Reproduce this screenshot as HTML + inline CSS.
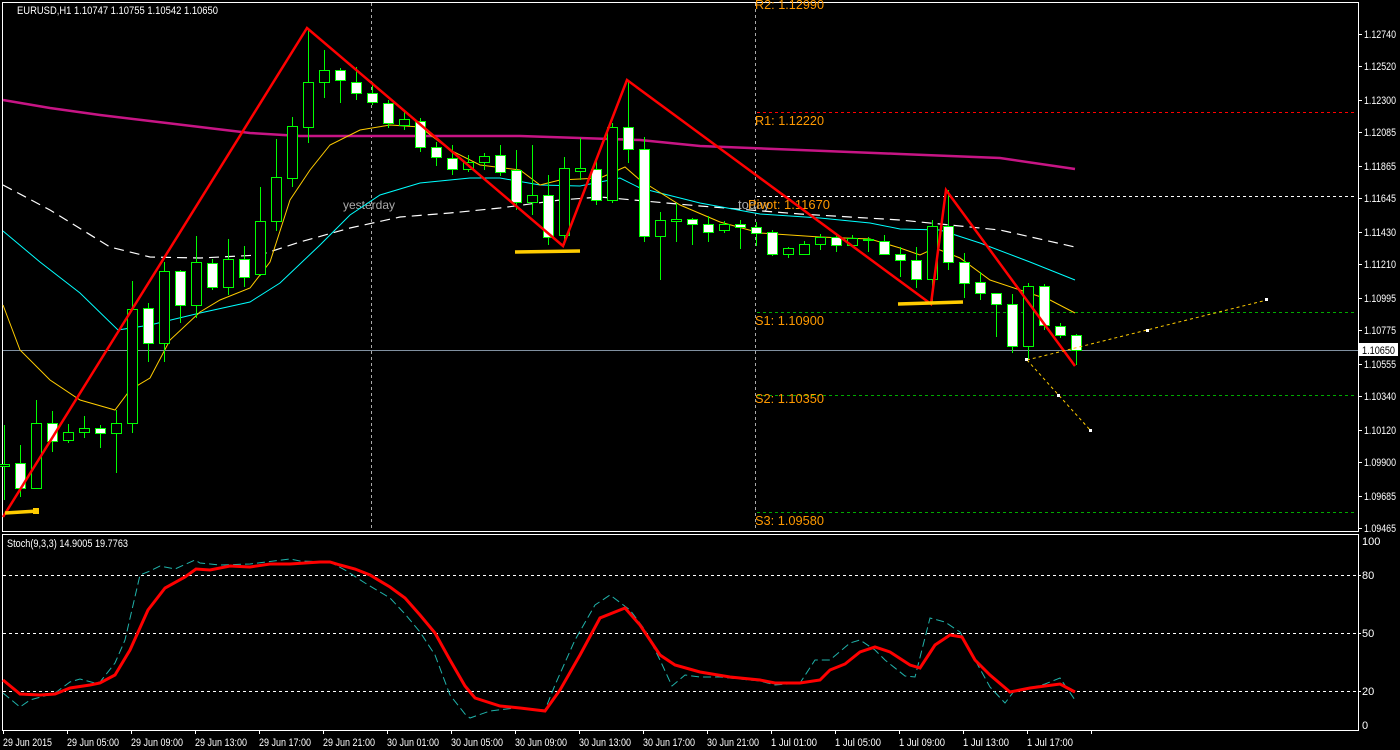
<!DOCTYPE html>
<html><head><meta charset="utf-8">
<style>
html,body{margin:0;padding:0;background:#000;width:1400px;height:750px;overflow:hidden}
svg{display:block}
text{font-family:"Liberation Sans",sans-serif}
</style></head><body>
<svg id="s" width="1400" height="750" viewBox="0 0 1400 750" xmlns="http://www.w3.org/2000/svg">
<rect width="1400" height="750" fill="#000"/>
<rect x="2.5" y="2.5" width="1356" height="529" fill="none" stroke="#fff" stroke-width="1"/>
<rect x="2.5" y="534.5" width="1356" height="196" fill="none" stroke="#fff" stroke-width="1"/>
<line x1="371.5" y1="3" x2="371.5" y2="531" stroke="#aaa" stroke-dasharray="3,3"/>
<line x1="755.5" y1="3" x2="755.5" y2="531" stroke="#aaa" stroke-dasharray="3,3"/>
<line x1="757" y1="112.5" x2="1357" y2="112.5" stroke="#f00" stroke-dasharray="3,3"/>
<line x1="757" y1="196.5" x2="1357" y2="196.5" stroke="#fff" stroke-dasharray="3,3"/>
<line x1="757" y1="312.5" x2="1357" y2="312.5" stroke="#0a0" stroke-dasharray="3,3"/>
<line x1="757" y1="395.5" x2="1357" y2="395.5" stroke="#0a0" stroke-dasharray="3,3"/>
<line x1="757" y1="512.5" x2="1357" y2="512.5" stroke="#0a0" stroke-dasharray="3,3"/>
<line x1="3" y1="350.5" x2="1358" y2="350.5" stroke="#8090a0"/>
<g font-size="13" fill="#f90">
<text x="755" y="9" textLength="69" lengthAdjust="spacingAndGlyphs">R2: 1.12990</text>
<text x="755" y="125" textLength="69" lengthAdjust="spacingAndGlyphs">R1: 1.12220</text>
<text x="755" y="325" textLength="69" lengthAdjust="spacingAndGlyphs">S1: 1.10900</text>
<text x="755" y="403" textLength="69" lengthAdjust="spacingAndGlyphs">S2: 1.10350</text>
<text x="755" y="525" textLength="69" lengthAdjust="spacingAndGlyphs">S3: 1.09580</text>
</g>
<text x="343" y="209" font-size="12" fill="#aaa">yesterday</text>
<text x="738" y="209" font-size="13" fill="#aaa">today</text>
<text x="748" y="209" font-size="13" fill="#f90" textLength="82" lengthAdjust="spacingAndGlyphs">Pivot: 1.11670</text>
<g fill="none">
<polyline stroke="#c71585" stroke-width="2.5" points="3,100 50,108 100,115 150,121 200,127 250,133 300,136 400,136 520,136 640,140 700,146 800,150 900,154 1000,158 1075,169"/>
<polyline stroke="#fff" stroke-width="1.2" stroke-dasharray="10,6" points="3,185 50,210 110,247 150,257 200,258 260,255 300,242 350,228 400,217 450,213 500,208 560,200 600,197 700,206 800,214 900,220 1000,230 1075,247"/>
<polyline stroke="#0ff" stroke-width="1" points="3,231 40,262 80,293 118,330 150,325 200,313 250,302 280,283 320,245 350,215 380,195 420,183 470,178 500,178 540,185 580,186 620,178 640,188 700,203 760,214 820,218 870,223 900,229 940,230 980,243 1030,262 1075,280"/>
<polyline stroke="#fc0" stroke-width="1" points="3,305 20,350 50,380 80,400 115,410 130,390 150,378 170,340 200,312 220,300 250,288 270,262 290,200 310,170 330,145 360,130 390,125 420,127 450,150 480,165 520,170 540,185 560,180 600,178 625,167 640,180 680,205 720,222 760,233 820,237 870,239 900,248 920,255 935,248 960,258 990,280 1020,290 1050,300 1075,313"/>
</g>
<g id="candles"></g>
<polyline fill="none" stroke="#f00" stroke-width="2.5" points="3,517 307,28 563,246 627,80 931,304 946,190 1075,366"/>
<g stroke="#fc0" stroke-width="3.5">
<line x1="5" y1="513" x2="38" y2="511"/>
<line x1="515" y1="252" x2="580" y2="251"/>
<line x1="898" y1="304" x2="963" y2="302"/>
</g>
<rect x="33" y="508" width="6" height="6" fill="#fc0"/>
<g stroke="#fc0" stroke-width="1" stroke-dasharray="3,3">
<line x1="1027" y1="360" x2="1267" y2="300"/>
<line x1="1027" y1="360" x2="1091" y2="431"/>
</g>
<g fill="#fff"><rect x="1025" y="358" width="3" height="3"/><rect x="1146" y="329" width="3" height="3"/><rect x="1265" y="298" width="3" height="3"/><rect x="1057" y="394" width="3" height="3"/><rect x="1089" y="429" width="3" height="3"/></g>
<text x="17" y="14" font-size="11" fill="#fff" textLength="201" lengthAdjust="spacingAndGlyphs">EURUSD,H1  1.10747 1.10755 1.10542 1.10650</text>
<rect x="1359" y="343" width="39" height="13" fill="#fff"/>
<text x="1362" y="354" font-size="11" fill="#000" textLength="33" lengthAdjust="spacingAndGlyphs">1.10650</text>
<g stroke="#fff" stroke-dasharray="3,3">
<line x1="3" y1="575.5" x2="1358" y2="575.5"/>
<line x1="3" y1="633.5" x2="1358" y2="633.5"/>
<line x1="3" y1="691.5" x2="1358" y2="691.5"/>
</g>
<polyline fill="none" stroke="#20b2aa" stroke-width="1" stroke-dasharray="8,4" points="3,693 20,707 30,700 55,693 70,682 80,679 95,683 100,682 115,663 125,640 140,575 150,571 160,566 175,569 195,560 200,563 220,565 250,564 290,559 300,561 330,562 345,570 365,583 390,598 405,614 420,632 435,655 450,695 465,714 470,718 490,711 515,708 545,710 555,685 575,640 595,605 610,595 630,610 645,630 660,660 672,686 685,675 700,677 720,677 760,681 775,685 800,683 815,660 830,660 850,643 860,640 875,650 885,660 905,676 915,677 930,618 945,622 960,632 975,660 990,687 1005,703 1015,690 1030,688 1045,684 1060,678 1075,700"/>
<polyline fill="none" stroke="#f00" stroke-width="3" points="3,680 20,694 40,695 55,694 70,688 90,685 100,683 115,675 130,650 148,610 165,588 185,577 196,569 210,570 230,566 250,567 270,564 290,564 320,562 330,562 340,565 355,569 370,575 390,587 405,598 420,615 435,633 450,660 465,686 475,698 500,706 520,708 545,711 560,690 580,655 600,618 625,608 640,625 660,655 675,665 700,672 730,677 760,680 775,683 800,683 820,680 830,670 845,664 860,652 875,647 890,652 910,665 920,668 935,645 950,635 962,637 975,660 990,675 1010,692 1030,688 1045,686 1060,684 1075,692"/>
<text x="7" y="547" font-size="11" fill="#fff" textLength="121" lengthAdjust="spacingAndGlyphs">Stoch(9,3,3) 14.9005 19.7763</text>
<g font-size="11" fill="#fff">
<text x="1362" y="545">100</text><text x="1362" y="579">80</text><text x="1362" y="637">50</text><text x="1362" y="695">20</text><text x="1362" y="729">0</text>
</g>
<g stroke="#fff"><line x1="1358" y1="575.5" x2="1361" y2="575.5"/><line x1="1358" y1="633.5" x2="1361" y2="633.5"/><line x1="1358" y1="691.5" x2="1361" y2="691.5"/></g>
<g font-size="11" fill="#fff" lengthAdjust="spacingAndGlyphs">
<text x="3" y="746" textLength="49" lengthAdjust="spacingAndGlyphs">29 Jun 2015</text>
<text x="67" y="746" textLength="52" lengthAdjust="spacingAndGlyphs">29 Jun 05:00</text>
<text x="131" y="746" textLength="52" lengthAdjust="spacingAndGlyphs">29 Jun 09:00</text>
<text x="195" y="746" textLength="52" lengthAdjust="spacingAndGlyphs">29 Jun 13:00</text>
<text x="259" y="746" textLength="52" lengthAdjust="spacingAndGlyphs">29 Jun 17:00</text>
<text x="323" y="746" textLength="52" lengthAdjust="spacingAndGlyphs">29 Jun 21:00</text>
<text x="387" y="746" textLength="52" lengthAdjust="spacingAndGlyphs">30 Jun 01:00</text>
<text x="451" y="746" textLength="52" lengthAdjust="spacingAndGlyphs">30 Jun 05:00</text>
<text x="515" y="746" textLength="52" lengthAdjust="spacingAndGlyphs">30 Jun 09:00</text>
<text x="579" y="746" textLength="52" lengthAdjust="spacingAndGlyphs">30 Jun 13:00</text>
<text x="643" y="746" textLength="52" lengthAdjust="spacingAndGlyphs">30 Jun 17:00</text>
<text x="707" y="746" textLength="52" lengthAdjust="spacingAndGlyphs">30 Jun 21:00</text>
<text x="771" y="746" textLength="46" lengthAdjust="spacingAndGlyphs">1 Jul 01:00</text>
<text x="835" y="746" textLength="46" lengthAdjust="spacingAndGlyphs">1 Jul 05:00</text>
<text x="899" y="746" textLength="46" lengthAdjust="spacingAndGlyphs">1 Jul 09:00</text>
<text x="963" y="746" textLength="46" lengthAdjust="spacingAndGlyphs">1 Jul 13:00</text>
<text x="1027" y="746" textLength="46" lengthAdjust="spacingAndGlyphs">1 Jul 17:00</text>
</g>
<g font-size="11" fill="#fff" id="pax"></g>
<g id="ticks" stroke="#fff"></g>
</svg>
<script>
var d=[[464,466,425,500,1],[463,488,445,497,0],[423,488,400,488,1],[423,441,411,452,0],[432,440,424,443,1],[428,432,416,438,1],[428,433,425,448,0],[423,433,410,473,1],[309,423,281,433,1],[308,343,303,362,0],[271,343,262,362,1],[271,305,270,323,0],[262,305,236,318,1],[263,287,259,290,0],[259,287,239,295,1],[259,277,246,287,0],[221,274,187,276,1],[177,221,139,231,1],[126,178,117,187,1],[82,127,28,143,1],[70,82,50,98,1],[70,80,68,103,0],[82,93,67,100,0],[93,102,82,105,0],[103,123,100,128,0],[119,125,112,130,1],[121,147,118,152,0],[147,157,142,166,0],[158,169,145,175,0],[162,169,155,172,1],[156,162,153,170,1],[155,172,145,176,0],[170,202,150,210,0],[195,202,145,215,1],[195,237,175,245,0],[168,235,157,245,1],[168,171,138,180,1],[169,200,158,205,0],[127,200,123,203,1],[127,149,80,163,0],[149,236,137,242,0],[220,236,212,280,1],[219,221,203,242,1],[219,224,218,245,0],[224,232,216,242,0],[224,230,221,233,1],[224,227,220,249,0],[227,233,222,246,0],[232,254,230,256,0],[248,254,247,258,1],[244,254,241,254,1],[237,244,234,250,1],[237,245,233,252,0],[238,245,235,245,1],[239,240,237,252,1],[241,254,235,255,0],[254,260,247,277,0],[260,279,247,288,0],[226,279,220,303,1],[226,262,190,270,0],[262,283,253,298,0],[282,293,272,300,0],[293,304,293,337,0],[304,346,294,353,0],[286,346,283,360,1],[286,325,284,330,0],[326,335,323,338,0],[335,350,334,365,0]];
var ns="http://www.w3.org/2000/svg",g=document.getElementById("candles");
function mk(p,t,a){var e=document.createElementNS(ns,t);for(var k in a)e.setAttribute(k,a[k]);p.appendChild(e);return e;}
d.forEach(function(c,i){var x=4+16*i;
mk(g,"line",{x1:x+0.5,y1:c[2],x2:x+0.5,y2:c[3],stroke:"#0f0","stroke-width":1});
var h=Math.max(c[1]-c[0],1);
mk(g,"rect",{x:x-4.5,y:c[0]+0.5,width:10,height:h,fill:c[4]?"#000":"#fff",stroke:"#0f0","stroke-width":1});});
var t=document.getElementById("ticks"),pax=document.getElementById("pax");
var lab=["1.12740","1.12520","1.12300","1.12085","1.11865","1.11645","1.11430","1.11210","1.10995","1.10775","1.10555","1.10340","1.10120","1.09900","1.09685","1.09465"];
[34,66,100,132,166,198,232,264,298,330,364,396,430,462,496,528].forEach(function(y,i){mk(t,"line",{x1:1358,x2:1362,y1:y+.5,y2:y+.5});var e=mk(pax,"text",{x:1364,y:y+4,textLength:32,lengthAdjust:"spacingAndGlyphs"});e.textContent=lab[i];});
for(var x=3;x<1100;x+=64){mk(t,"line",{x1:x+.5,x2:x+.5,y1:730,y2:734});}
</script>
</body></html>
